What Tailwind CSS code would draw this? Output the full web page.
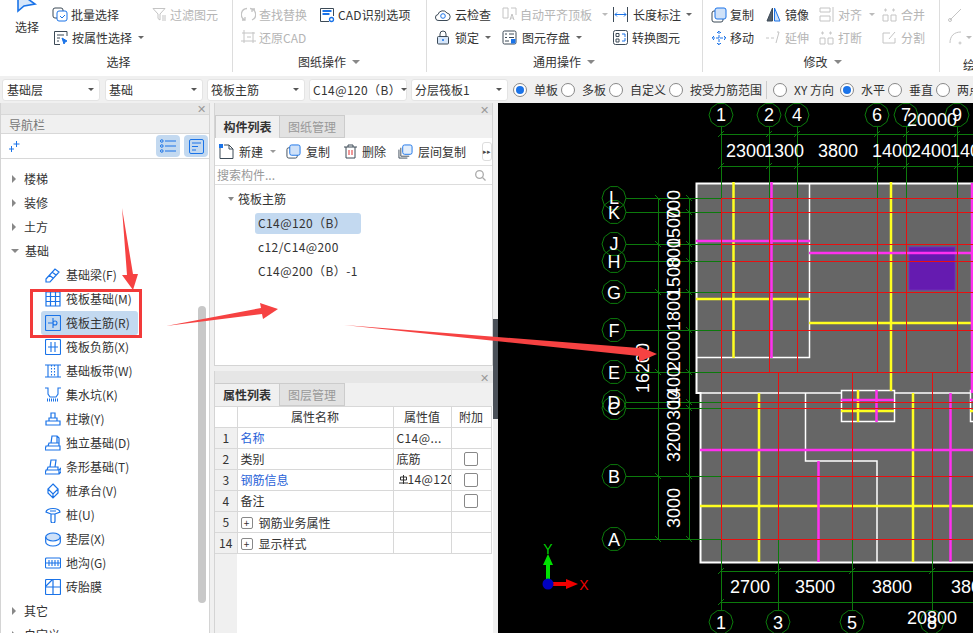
<!DOCTYPE html>
<html lang="zh-CN">
<head>
  <meta charset="UTF-8" />
  <title>筏板主筋</title>
  <script src="https://cdn.jsdelivr.net/npm/@tailwindcss/browser@4"></script>
</head>
<body class="relative w-[973px] h-[633px] overflow-hidden bg-[#f0f0f0] text-[12px] leading-none text-[#333] font-['Noto_Sans_CJK_SC',sans-serif]">
  <!-- Ribbon -->
  <header class="flex h-[76px] bg-white">
    <!-- 选择 -->
    <section class="w-[233px] shrink-0 h-[72px] border-r border-[#ddd] flex flex-col">
      <div class="flex h-[53px]">
        <div class="w-[52px] flex flex-col items-center">
          <svg class="ml-[2px] h-[13px] w-[24px]" viewBox="0 0 24 13"><path d="M3 -8 L3 11 L9 6 L20 4 Z" fill="#d6e6fa" stroke="#1a73e8" stroke-width="1.6"/></svg>
          <span class="mt-[8px] ml-[2px]">选择</span>
        </div>
        <div class="w-[100px] pt-[3px]">
          <div class="flex items-center h-[23px]"><svg class="w-[17px] h-[17px]" viewBox="0 0 17 17" fill="none" stroke="#3c4a57"><rect x="1" y="2" width="10" height="10" rx="2"/><rect x="5" y="5" width="10" height="10" rx="2" fill="#fff" stroke="#1a73e8"/><path d="M8 10l2 2 3-3" stroke="#1a73e8"/></svg><span class="ml-[2px]">批量选择</span></div>
          <div class="flex items-center h-[23px]"><svg class="ml-[1px] w-[16px] h-[16px]" viewBox="0 0 16 16" fill="none" stroke="#3c4a57"><path d="M14 6V1.500H1.500v13H7M4 5h7M4 8h3M4 11h2"/><path d="M9 8l5 3-2 1-1 2z" fill="#1a73e8" stroke="#1a73e8"/></svg><span class="ml-[3px]">按属性选择</span><i class="ml-[6px] border-x-[3px] border-t-[3px] border-x-transparent border-t-[#666]"></i></div>
        </div>
        <div class="pt-[3px] flex items-start">
          <div class="flex items-center h-[23px] text-[#b5b5b5]"><svg class="w-[15px] h-[15px]" viewBox="0 0 15 15" fill="none" stroke="#c4c4c4"><path d="M1 1.500h12L8 7v6L6 11.500V7zM10 9h4M10 11h4M10 13h4"/></svg><span class="ml-[3px]">过滤图元</span></div>
        </div>
      </div>
      <div class="h-[20px] flex items-center justify-center pl-[5px]">选择</div>
    </section>
    <!-- 图纸操作 -->
    <section class="w-[194px] shrink-0 h-[72px] border-r border-[#ddd] flex flex-col pl-[8px]">
      <div class="h-[53px] pt-[3px] flex">
        <div class="w-[78px] text-[#b5b5b5]">
          <div class="flex items-center h-[23px]"><svg class="w-[15px] h-[15px]" viewBox="0 0 15 15" fill="none" stroke="#c4c4c4" stroke-width="1.300"><path d="M6 1.500A6 6 0 0 0 4 13M9 1.500A6 6 0 0 1 11 13M4 10v3H1M11 5V2h3"/></svg><span class="ml-[3px]">查找替换</span></div>
          <div class="flex items-center h-[23px]"><svg class="w-[15px] h-[15px]" viewBox="0 0 15 15" fill="none" stroke="#c4c4c4"><path d="M3 0v13M0 11h15M12 2v11M1 3h13M6 7h4"/></svg><span class="ml-[3px]">还原CAD</span></div>
        </div>
        <div class="flex items-center h-[23px]"><svg class="w-[16px] h-[16px]" viewBox="0 0 16 16" fill="none"><path d="M10 14.500H1.500v-13h13V9" stroke="#3c4a57"/><circle cx="12.500" cy="12.500" r="2" stroke="#1a73e8" stroke-width="1.300"/><path d="M3.500 4h9M3.500 7h7" stroke="#1a73e8" stroke-width="2"/></svg><span class="ml-[3px] tracking-[0.2px]">CAD识别选项</span></div>
      </div>
      <div class="h-[18px] flex items-center justify-center pr-[9px]">图纸操作<i class="ml-[6px] border-x-[4px] border-t-[4px] border-x-transparent border-t-[#888]"></i></div>
    </section>
    <!-- 通用操作 -->
    <section class="w-[276px] shrink-0 h-[72px] border-r border-[#ddd] flex flex-col pl-[8px]">
      <div class="h-[53px] pt-[3px] flex">
        <div class="w-[67px]">
          <div class="flex items-center h-[23px]"><svg class="w-[16px] h-[14px]" viewBox="0 0 16 14" fill="none"><path d="M4 12.500a3 3 0 0 1-1-6A5 5 0 0 1 12 5a3.800 3.800 0 0 1 0 7.500z" stroke="#3c4a57"/><circle cx="8" cy="8" r="2.300" stroke="#1a73e8"/></svg><span class="ml-[4px]">云检查</span></div>
          <div class="flex items-center h-[23px]"><svg class="ml-[1px] w-[14px] h-[15px]" viewBox="0 0 14 15" fill="none"><path d="M4 6V4a3 3 0 0 1 6 0v2" stroke="#3c4a57"/><rect x="1.500" y="6.500" width="11" height="7.500" rx="1" fill="#d6e6fa" stroke="#3c4a57"/><path d="M7 9v2" stroke="#1a73e8" stroke-width="1.500"/></svg><span class="ml-[5px]">锁定</span><i class="ml-[6px] border-x-[3px] border-t-[3px] border-x-transparent border-t-[#666]"></i></div>
        </div>
        <div class="w-[111px]">
          <div class="flex items-center h-[23px] text-[#b5b5b5]"><svg class="w-[15px] h-[15px]" viewBox="0 0 15 15" fill="none" stroke="#c4c4c4"><path d="M1 1h5v10H1zM9 1h5v7M8 13l2-6 2 6M9 11h2"/></svg><span class="ml-[3px]">自动平齐顶板</span><i class="ml-[10px] border-x-[3px] border-t-[3px] border-x-transparent border-t-[#bbb]"></i></div>
          <div class="flex items-center h-[23px]"><svg class="w-[15px] h-[15px]" viewBox="0 0 15 15" fill="none" stroke="#3c4a57"><rect x="1" y="1" width="13" height="13" rx="1.500"/><path d="M3 4h2M7 4h5M3 7.500h2M7 7.500h5M3 11h4"/><rect x="9" y="9" width="4.500" height="4.500" fill="#1a73e8" stroke="none"/></svg><span class="ml-[5px]">图元存盘</span><i class="ml-[6px] border-x-[3px] border-t-[3px] border-x-transparent border-t-[#666]"></i></div>
        </div>
        <div>
          <div class="flex items-center h-[23px]"><svg class="w-[15px] h-[15px]" viewBox="0 0 15 15" fill="none"><path d="M.500 0v15M14.500 0v15" stroke="#3c4a57"/><path d="M2 7.500h11M4 5.500l-2 2 2 2M11 5.500l2 2-2 2" stroke="#1a73e8"/></svg><span class="ml-[5px]">长度标注</span><i class="ml-[5px] border-x-[3px] border-t-[3px] border-x-transparent border-t-[#666]"></i></div>
          <div class="flex items-center h-[23px]"><svg class="w-[15px] h-[15px]" viewBox="0 0 15 15" fill="none"><rect x=".500" y=".500" width="14" height="14" rx="2" stroke="#3c4a57"/><path d="M3 3.500h3v3H3zM3 9h3v3H3z" stroke="#3c4a57"/><path d="M9 4h3v3M12 8v3H9" stroke="#1a73e8"/></svg><span class="ml-[4px]">转换图元</span></div>
        </div>
      </div>
      <div class="h-[18px] flex items-center justify-center pr-[9px]">通用操作<i class="ml-[6px] border-x-[4px] border-t-[4px] border-x-transparent border-t-[#888]"></i></div>
    </section>
    <!-- 修改 -->
    <section class="w-[237px] shrink-0 h-[72px] border-r border-[#ddd] flex flex-col pl-[8px]">
      <div class="h-[53px] pt-[3px] flex">
        <div class="w-[55px]">
          <div class="flex items-center h-[23px]"><svg class="w-[16px] h-[16px]" viewBox="0 0 16 16" fill="none"><rect x="1" y="4" width="11" height="11" rx="2" stroke="#3c4a57"/><rect x="4" y="1" width="11" height="11" rx="2" fill="#cfe1f8" stroke="#1a73e8"/></svg><span class="ml-[3px]">复制</span></div>
          <div class="flex items-center h-[23px]"><svg class="w-[16px] h-[16px]" viewBox="0 0 16 16" fill="none" stroke="#1a73e8"><path d="M8 1v14M1 8h14M6 3l2-2 2 2M6 13l2 2 2-2M3 6L1 8l2 2M13 6l2 2-2 2" stroke-dasharray="3 1"/></svg><span class="ml-[3px]">移动</span></div>
        </div>
        <div class="w-[53px]">
          <div class="flex items-center h-[23px]"><svg class="w-[15px] h-[15px]" viewBox="0 0 15 15"><path d="M6.500 1v13H1z" fill="#55606b" stroke="#3c4a57"/><path d="M8.500 1v13H14z" fill="#cfe1f8" stroke="#1a73e8"/></svg><span class="ml-[4px]">镜像</span></div>
          <div class="flex items-center h-[23px] text-[#b5b5b5]"><svg class="w-[15px] h-[15px]" viewBox="0 0 15 15" fill="none" stroke="#c4c4c4"><path d="M0 8h3M5 8h3M11 2l2 0-3 11"/></svg><span class="ml-[4px]">延伸</span></div>
        </div>
        <div class="w-[63px] text-[#b5b5b5]">
          <div class="flex items-center h-[23px]"><svg class="w-[15px] h-[15px]" viewBox="0 0 15 15" fill="none" stroke="#c4c4c4"><path d="M1 1h10v4H1zM1 9h10v5H1zM14 0v15"/></svg><span class="ml-[4px]">对齐</span><i class="ml-[7px] border-x-[3px] border-t-[3px] border-x-transparent border-t-[#bbb]"></i></div>
          <div class="flex items-center h-[23px]"><svg class="w-[15px] h-[15px]" viewBox="0 0 15 15" fill="none" stroke="#c4c4c4"><path d="M1 8h5v6H1zM9 8h5v6H9zM3 2h1v2H3zM11 2h1v2h-1z"/></svg><span class="ml-[4px]">打断</span></div>
        </div>
        <div class="text-[#b5b5b5]">
          <div class="flex items-center h-[23px]"><svg class="w-[15px] h-[15px]" viewBox="0 0 15 15" fill="none" stroke="#c4c4c4"><path d="M1 8h5v6H1zM9 8h5v6H9zM3 2h1v2H3zM11 2h1v2h-1z"/></svg><span class="ml-[4px]">合并</span></div>
          <div class="flex items-center h-[23px]"><svg class="w-[15px] h-[15px]" viewBox="0 0 15 15" fill="none" stroke="#c4c4c4"><path d="M8 3H1v10h12V8M7 9l6-7"/></svg><span class="ml-[4px]">分割</span></div>
        </div>
      </div>
      <div class="h-[18px] flex items-center justify-center pr-[5px]">修改<i class="ml-[6px] border-x-[4px] border-t-[4px] border-x-transparent border-t-[#888]"></i></div>
    </section>
    <!-- 绘图, cut off by the window -->
    <section class="flex-1 h-[72px] pl-[8px] pt-[3px] overflow-hidden">
      <div class="flex items-center h-[23px]"><svg class="w-[15px] h-[15px]" viewBox="0 0 15 15" fill="none" stroke="#c4c4c4"><path d="M2 13L13 2"/><circle cx="2" cy="13" r="1.500"/></svg></div>
      <div class="flex items-center h-[23px]"><svg class="w-[15px] h-[15px]" viewBox="0 0 15 15" fill="none" stroke="#c4c4c4"><path d="M2 13C2 6 6 2 13 2"/><circle cx="12" cy="13" r="1"/></svg><i class="ml-[3px] border-x-[3px] border-t-[3px] border-x-transparent border-t-[#bbb]"></i></div>
      <div class="h-[18px] mt-[7px] ml-[15px] flex items-center">绘</div>
    </section>
  </header>

  <!-- Property toolbar -->
  <div class="flex items-center h-[27px] bg-[#f0f0f0] pl-[2px] whitespace-nowrap">
    <div class="w-[98px] h-[22px] shrink-0 mr-[5px] pl-[4px] pr-[5px] bg-white rounded-[3px] border border-[#e4e4e4] flex items-center justify-between"><span>基础层</span><i class="border-x-[3px] border-t-[3px] border-x-transparent border-t-[#555]"></i></div>
    <div class="w-[98px] h-[22px] shrink-0 mr-[4px] pl-[3px] pr-[5px] bg-white rounded-[3px] border border-[#e4e4e4] flex items-center justify-between"><span>基础</span><i class="border-x-[3px] border-t-[3px] border-x-transparent border-t-[#555]"></i></div>
    <div class="w-[98px] h-[22px] shrink-0 mr-[4px] pl-[3px] pr-[5px] bg-white rounded-[3px] border border-[#e4e4e4] flex items-center justify-between"><span>筏板主筋</span><i class="border-x-[3px] border-t-[3px] border-x-transparent border-t-[#555]"></i></div>
    <div class="w-[98px] h-[22px] shrink-0 mr-[4px] pl-[3px] pr-[5px] bg-white rounded-[3px] border border-[#e4e4e4] flex items-center justify-between"><span class="tracking-[0.4px]">C14@120（B）</span><i class="border-x-[3px] border-t-[3px] border-x-transparent border-t-[#555]"></i></div>
    <div class="w-[97px] h-[22px] shrink-0 mr-[5px] pl-[3px] pr-[5px] bg-white rounded-[3px] border border-[#e4e4e4] flex items-center justify-between"><span>分层筏板1</span><i class="border-x-[3px] border-t-[3px] border-x-transparent border-t-[#555]"></i></div>
    <span class="w-[14px] h-[14px] shrink-0 rounded-full border border-[#888] bg-white flex items-center justify-center"><i class="w-[8px] h-[8px] rounded-full bg-[#1a73e8]"></i></span><span class="ml-[7px] w-[27px] shrink-0">单板</span>
    <span class="w-[14px] h-[14px] shrink-0 rounded-full border border-[#888] bg-white"></span><span class="ml-[7px] w-[27px] shrink-0">多板</span>
    <span class="w-[14px] h-[14px] shrink-0 rounded-full border border-[#888] bg-white"></span><span class="ml-[7px] w-[39px] shrink-0">自定义</span>
    <span class="w-[14px] h-[14px] shrink-0 rounded-full border border-[#888] bg-white"></span><span class="ml-[7px] w-[76px] shrink-0">按受力筋范围</span>
    <span class="w-px h-[18px] shrink-0 bg-[#ccc] mr-[6px]"></span>
    <span class="w-[14px] h-[14px] shrink-0 rounded-full border border-[#888] bg-white"></span><span class="ml-[7px] w-[46px] shrink-0">XY 方向</span>
    <span class="w-[14px] h-[14px] shrink-0 rounded-full border border-[#888] bg-white flex items-center justify-center"><i class="w-[8px] h-[8px] rounded-full bg-[#1a73e8]"></i></span><span class="ml-[7px] w-[27px] shrink-0">水平</span>
    <span class="w-[14px] h-[14px] shrink-0 rounded-full border border-[#888] bg-white"></span><span class="ml-[7px] w-[27px] shrink-0">垂直</span>
    <span class="w-[14px] h-[14px] shrink-0 rounded-full border border-[#888] bg-white"></span><span class="ml-[7px] shrink-0">两点</span>
  </div>

  <div class="flex h-[530px]">
    <!-- Navigation panel -->
    <aside class="relative w-[210px] shrink-0 flex flex-col bg-white border-x border-[#d4d4d4]">
      <div class="h-[12px] bg-[#e6e6e6] flex justify-end items-center pr-[3px] text-[#999] text-[11px]">✕</div>
      <div class="h-[22px] pt-[2px] bg-[#f0f0f0] border-y border-[#d8d8d8] flex items-center pl-[8px] text-[#777]">导航栏</div>
      <div class="h-[28px] border-b border-[#d8d8d8] flex items-center justify-between pl-[8px] pr-[1px]">
        <svg class="w-[11px] h-[11px]" viewBox="0 0 11 11" stroke="#1a73e8" fill="none"><path d="M7.500 0v6M4.500 3h6M2.500 5v6M0 8h5"/></svg>
        <div class="flex gap-[4px]">
          <span class="w-[24px] h-[22px] rounded-[4px] bg-[#c3d9f0] flex items-center justify-center"><svg class="w-[16px] h-[14px]" viewBox="0 0 16 14" fill="none" stroke="#1a73e8"><circle cx="1.800" cy="2" r="1.300"/><circle cx="1.800" cy="7" r="1.300"/><circle cx="1.800" cy="12" r="1.300"/><path d="M5 2h11M5 7h11M5 12h11"/></svg></span>
          <span class="w-[24px] h-[22px] rounded-[4px] bg-[#c3d9f0] flex items-center justify-center"><svg class="w-[15px] h-[15px]" viewBox="0 0 15 15" fill="none" stroke="#1a73e8"><rect x=".500" y=".500" width="14" height="14" rx="1.500"/><path d="M3 4h9M3 7.500h6M3 11h4"/></svg></span>
        </div>
      </div>
      <div class="pt-[8px] h-full overflow-hidden">
        <div class="h-[24px] flex items-center pl-[11px]"><i class="border-y-[4px] border-l-[4px] border-y-transparent border-l-[#888]"></i><span class="ml-[8px]">楼梯</span></div>
        <div class="h-[24px] flex items-center pl-[11px]"><i class="border-y-[4px] border-l-[4px] border-y-transparent border-l-[#888]"></i><span class="ml-[8px]">装修</span></div>
        <div class="h-[24px] flex items-center pl-[11px]"><i class="border-y-[4px] border-l-[4px] border-y-transparent border-l-[#888]"></i><span class="ml-[8px]">土方</span></div>
        <div class="h-[24px] flex items-center pl-[10px]"><i class="border-x-[4px] border-t-[4px] border-x-transparent border-t-[#888]"></i><span class="ml-[6px]">基础</span></div>
        <div class="h-[24px] ml-[40px] w-[97px] pl-[4px] rounded-[3px] flex items-center"><svg class="w-[16px] h-[16px]" viewBox="0 0 16 16" fill="none" stroke="#1a73e8" stroke-width="1.200"><path d="M1 12L10 2l4 3-9 10-4 0zM4 8l4 3M7 5l4 3"/></svg><span class="ml-[5px]">基础梁(F)</span></div>
        <div class="h-[24px] ml-[40px] w-[97px] pl-[4px] rounded-[3px] flex items-center"><svg class="w-[16px] h-[16px]" viewBox="0 0 16 16" fill="none" stroke="#1a73e8" stroke-width="1.200"><path d="M1 1h14v14H1zM5.500 1v14M10.500 1v14M1 5.500h14M1 10.500h14"/></svg><span class="ml-[5px] whitespace-nowrap">筏板基础(M)</span></div>
        <div class="h-[24px] ml-[40px] w-[97px] pl-[4px] rounded-[3px] flex items-center bg-[#c3d9f0]"><svg class="w-[16px] h-[16px]" viewBox="0 0 16 16" fill="none" stroke="#1a73e8" stroke-width="1.100"><rect x=".500" y=".500" width="15" height="15" rx="1"/><path d="M8 3v10M3 8h5a2 2 0 0 1 4 0 2 2 0 0 1-4 0"/></svg><span class="ml-[5px] whitespace-nowrap">筏板主筋(R)</span></div>
        <div class="h-[24px] ml-[40px] w-[97px] pl-[4px] rounded-[3px] flex items-center"><svg class="w-[16px] h-[16px]" viewBox="0 0 16 16" fill="none" stroke="#1a73e8" stroke-width="1.100"><rect x=".500" y=".500" width="15" height="15" rx="1"/><path d="M6 3v10M10 3v10M3 8h10"/></svg><span class="ml-[5px] whitespace-nowrap">筏板负筋(X)</span></div>
        <div class="h-[24px] ml-[40px] w-[97px] pl-[4px] rounded-[3px] flex items-center"><svg class="w-[16px] h-[16px]" viewBox="0 0 16 16" fill="none" stroke="#1a73e8" stroke-width="1.100"><path d="M0 2h16M0 14h16M3 2v12M13 2v12"/><path d="M6.500 2v12M9.500 2v12" stroke-dasharray="1.500 1.500"/></svg><span class="ml-[5px] whitespace-nowrap">基础板带(W)</span></div>
        <div class="h-[24px] ml-[40px] w-[97px] pl-[4px] rounded-[3px] flex items-center"><svg class="w-[16px] h-[16px]" viewBox="0 0 16 16" fill="none" stroke="#1a73e8" stroke-width="1.100"><path d="M0 1h3v6l2 3h6l2-3V1h3"/><path d="M2 13h12" stroke-dasharray="1 1" stroke-width="3"/></svg><span class="ml-[5px] whitespace-nowrap">集水坑(K)</span></div>
        <div class="h-[24px] ml-[40px] w-[97px] pl-[4px] rounded-[3px] flex items-center"><svg class="w-[16px] h-[16px]" viewBox="0 0 16 16" fill="none" stroke="#1a73e8" stroke-width="1.200"><path d="M6 2h4v5H6zM4 7h8v3H4zM1 10h14v4H1z"/></svg><span class="ml-[5px] whitespace-nowrap">柱墩(Y)</span></div>
        <div class="h-[24px] ml-[40px] w-[97px] pl-[4px] rounded-[3px] flex items-center"><svg class="w-[16px] h-[16px]" viewBox="0 0 16 16" fill="none" stroke="#1a73e8" stroke-width="1.200"><path d="M7 1h5v7H6zM4 8h10v3H3zM1 11h14v4H0zM12 1l2 2v5"/></svg><span class="ml-[5px] whitespace-nowrap">独立基础(D)</span></div>
        <div class="h-[24px] ml-[40px] w-[97px] pl-[4px] rounded-[3px] flex items-center"><svg class="w-[16px] h-[16px]" viewBox="0 0 16 16" fill="none" stroke="#1a73e8" stroke-width="1.200"><path d="M6 1h5l-1 7H5zM3 8h10v3H2zM1 11h13v4H0zM14 11l2-2v4l-2 2"/></svg><span class="ml-[5px] whitespace-nowrap">条形基础(T)</span></div>
        <div class="h-[24px] ml-[40px] w-[97px] pl-[4px] rounded-[3px] flex items-center"><svg class="w-[16px] h-[16px]" viewBox="0 0 16 16" fill="none" stroke="#1a73e8" stroke-width="1.200"><path d="M8 1l5 5-5 5-5-5zM3 6v4l5 5 5-5V6M8 11v4"/></svg><span class="ml-[5px] whitespace-nowrap">桩承台(V)</span></div>
        <div class="h-[24px] ml-[40px] w-[97px] pl-[4px] rounded-[3px] flex items-center"><svg class="w-[16px] h-[16px]" viewBox="0 0 16 16" fill="none" stroke="#1a73e8" stroke-width="1.200"><path d="M1 5a7 3.500 0 0 1 14 0l-5 2H6zM6 7v7a2 2 0 0 0 4 0V7M5 4h6"/></svg><span class="ml-[5px] whitespace-nowrap">桩(U)</span></div>
        <div class="h-[24px] ml-[40px] w-[97px] pl-[4px] rounded-[3px] flex items-center"><svg class="w-[16px] h-[16px]" viewBox="0 0 16 16" fill="none" stroke="#1a73e8" stroke-width="1.200"><ellipse cx="8" cy="6" rx="7.300" ry="4" fill="#cfe1f8"/><path d="M.700 6v5c0 2 3 4 7.300 4s7.300-2 7.300-4V6"/></svg><span class="ml-[5px] whitespace-nowrap">垫层(X)</span></div>
        <div class="h-[24px] ml-[40px] w-[97px] pl-[4px] rounded-[3px] flex items-center"><svg class="w-[16px] h-[16px]" viewBox="0 0 16 16" fill="none" stroke="#1a73e8" stroke-width="1.100"><rect x=".500" y="3" width="15" height="10" rx="1"/><path d="M1 8h14M4 5v6M7 5v6M10 5v6M13 5v6"/></svg><span class="ml-[5px] whitespace-nowrap">地沟(G)</span></div>
        <div class="h-[24px] ml-[40px] w-[97px] pl-[4px] rounded-[3px] flex items-center"><svg class="w-[16px] h-[16px]" viewBox="0 0 16 16" fill="none" stroke="#1a73e8" stroke-width="1.200"><rect x=".500" y=".500" width="15" height="15" rx="1"/><path d="M8 1v14M1 8h14M1 7l6-6"/></svg><span class="ml-[5px] whitespace-nowrap">砖胎膜</span></div>
        <div class="h-[24px] flex items-center pl-[11px]"><i class="border-y-[4px] border-l-[4px] border-y-transparent border-l-[#888]"></i><span class="ml-[8px]">其它</span></div>
        <div class="h-[24px] flex items-center pl-[11px]"><i class="border-y-[4px] border-l-[4px] border-y-transparent border-l-[#888]"></i><span class="ml-[8px]">自定义</span></div>
      </div>
      <div class="absolute left-[197px] top-[203px] w-[8px] h-[297px] rounded-[4px] bg-[#c8c8c8]"></div>
    </aside>

    <!-- Middle panels -->
    <div class="w-[4px] shrink-0"></div>
    <div class="w-[279px] shrink-0 flex flex-col">
      <section class="h-[263px] flex flex-col border border-[#d4d4d4] border-t-0 bg-white">
        <div class="h-[12px] bg-[#e6e6e6] flex justify-end items-center pr-[3px] text-[#999] text-[11px]">✕</div>
        <div class="h-[23px] bg-[#f0f0f0] flex">
          <span class="w-[65px] flex items-center justify-center font-bold border border-[#ccc] border-b-0">构件列表</span>
          <span class="w-[65px] flex items-center justify-center bg-[#e2e2e2] text-[#999] border border-l-0 border-[#ccc]">图纸管理</span>
        </div>
        <div class="h-[28px] flex items-center pl-[4px] border-b border-[#e0e0e0] whitespace-nowrap">
          <svg class="w-[15px] h-[16px] shrink-0" viewBox="0 0 15 16" fill="none" stroke="#3c4a57"><path d="M3 3H1v11.500h13V5l-4-4H5"/><path d="M10 1v4h4"/><rect x="0" y="0" width="4" height="4" fill="#1a73e8" stroke="none"/></svg>
          <span class="ml-[5px]">新建</span><i class="ml-[7px] border-x-[3px] border-t-[3px] border-x-transparent border-t-[#999]"></i>
          <svg class="ml-[10px] w-[15px] h-[15px] shrink-0" viewBox="0 0 16 16" fill="none"><rect x="1" y="4" width="11" height="11" rx="2" stroke="#3c4a57"/><rect x="4" y="1" width="11" height="11" rx="2" fill="#cfe1f8" stroke="#1a73e8"/></svg>
          <span class="ml-[5px]">复制</span>
          <svg class="ml-[14px] w-[13px] h-[15px] shrink-0" viewBox="0 0 13 15" fill="none" stroke="#3c4a57"><path d="M0 3h13M4 3V1h5v2M2 3v11h9V3"/><path d="M5 6v5M8 6v5" stroke="#e03030"/></svg>
          <span class="ml-[5px]">删除</span>
          <svg class="ml-[12px] w-[15px] h-[15px] shrink-0" viewBox="0 0 16 16" fill="none"><path d="M1 6v9h9" stroke="#3c4a57"/><path d="M3 4v9h9" stroke="#3c4a57"/><rect x="5" y="1" width="10" height="10" rx="2" fill="#e3eefb" stroke="#1a73e8"/></svg>
          <span class="ml-[5px]">层间复制</span>
          <span class="ml-[16px] w-[10px] h-[19px] shrink-0 rounded-[3px] border border-[#ddd] flex items-center justify-center text-[7px] text-[#444]">▸▸</span>
        </div>
        <div class="h-[19px] flex items-center justify-between pl-[2px] pr-[6px] border-b border-[#ddd] text-[#999]">搜索构件...
          <svg class="w-[11px] h-[11px]" viewBox="0 0 11 11" fill="none" stroke="#aaa" stroke-width="1.300"><circle cx="4.500" cy="4.500" r="3.800"/><path d="M7.500 7.500l3 3"/></svg>
        </div>
        <div class="flex-1 pt-[2px]">
          <div class="h-[24px] flex items-center pl-[13px]"><i class="border-x-[3px] border-t-[4px] border-x-transparent border-t-[#888]"></i><span class="ml-[4px]">筏板主筋</span></div>
          <div class="h-[24px] flex items-center ml-[40px]"><span class="w-[106px] h-[21px] flex items-center pl-[3px] rounded-[3px] bg-[#c3d9f0] tracking-[0.4px]">C14@120（B）</span></div>
          <div class="h-[24px] flex items-center ml-[43px] tracking-[0.4px]">c12/C14@200</div>
          <div class="h-[24px] flex items-center ml-[43px] tracking-[0.4px]">C14@200（B）-1</div>
        </div>
      </section>
      <div class="h-[5px]"></div>
      <section class="flex-1 flex flex-col border-l border-[#d4d4d4] bg-white">
        <div class="h-[12px] bg-[#e6e6e6] flex justify-end items-center pr-[4px] text-[#999] text-[11px]">✕</div>
        <div class="h-[23px] bg-[#f0f0f0] flex">
          <span class="w-[65px] flex items-center justify-center font-bold border border-[#ccc] border-b-0 border-l-0">属性列表</span>
          <span class="w-[65px] flex items-center justify-center bg-[#e2e2e2] text-[#999] border border-l-0 border-[#ccc]">图层管理</span>
        </div>
        <div class="flex-1 relative">
          <div class="absolute left-0 top-0 bottom-0 w-[22px] bg-[#f0f0f0]"></div>
          <table class="relative table-fixed border-collapse w-[276px]">
            <colgroup><col class="w-[22px]" /><col class="w-[156px]" /><col class="w-[58px]" /><col class="w-[40px]" /></colgroup>
            <tr class="h-[21px] bg-white text-center">
              <td class="border border-[#d8d8d8] border-l-0"></td><td class="border border-[#d8d8d8]">属性名称</td><td class="border border-[#d8d8d8]">属性值</td><td class="border border-[#d8d8d8]">附加</td>
            </tr>
            <tr class="h-[21px] bg-white">
              <td class="border border-[#d8d8d8] border-l-0 bg-[#f0f0f0] text-center">1</td><td class="border border-[#d8d8d8] pl-[3px] text-[#2a63d8]">名称</td><td class="border border-[#d8d8d8] pl-[3px] tracking-[0.4px]">C14@...</td><td class="border border-[#d8d8d8]"></td>
            </tr>
            <tr class="h-[21px] bg-white">
              <td class="border border-[#d8d8d8] border-l-0 bg-[#f0f0f0] text-center">2</td><td class="border border-[#d8d8d8] pl-[3px]">类别</td><td class="border border-[#d8d8d8] pl-[3px]">底筋</td><td class="border border-[#d8d8d8]"><span class="block mx-auto w-[14px] h-[14px] rounded-[2px] border border-[#888]"></span></td>
            </tr>
            <tr class="h-[21px] bg-white">
              <td class="border border-[#d8d8d8] border-l-0 bg-[#f0f0f0] text-center">3</td><td class="border border-[#d8d8d8] pl-[3px] text-[#2a63d8]">钢筋信息</td><td class="border border-[#d8d8d8] pl-[5px] overflow-hidden whitespace-nowrap tracking-[0.4px]"><svg class="inline-block w-[9px] h-[9px] mb-[3px]" viewBox="0 0 9 9" fill="none" stroke="#333"><path d="M4.500 0v9M0 8h9M1.500 2h6v3h-6z"/></svg>14@120</td><td class="border border-[#d8d8d8]"><span class="block mx-auto w-[14px] h-[14px] rounded-[2px] border border-[#888]"></span></td>
            </tr>
            <tr class="h-[21px] bg-white">
              <td class="border border-[#d8d8d8] border-l-0 bg-[#f0f0f0] text-center">4</td><td class="border border-[#d8d8d8] pl-[3px]">备注</td><td class="border border-[#d8d8d8]"></td><td class="border border-[#d8d8d8]"><span class="block mx-auto w-[14px] h-[14px] rounded-[2px] border border-[#888]"></span></td>
            </tr>
            <tr class="h-[21px] bg-white">
              <td class="border border-[#d8d8d8] border-l-0 bg-[#f0f0f0] text-center">5</td><td class="border border-[#d8d8d8] pl-[3px]"><span class="inline-flex items-center"><span class="w-[12px] h-[12px] rounded-[2px] border border-[#888] flex items-center justify-center text-[10px]">+</span><span class="ml-[6px]">钢筋业务属性</span></span></td><td class="border border-[#d8d8d8]"></td><td class="border border-[#d8d8d8]"></td>
            </tr>
            <tr class="h-[21px] bg-white">
              <td class="border border-[#d8d8d8] border-l-0 bg-[#f0f0f0] text-center">14</td><td class="border border-[#d8d8d8] pl-[3px]"><span class="inline-flex items-center"><span class="w-[12px] h-[12px] rounded-[2px] border border-[#888] flex items-center justify-center text-[10px]">+</span><span class="ml-[6px]">显示样式</span></span></td><td class="border border-[#d8d8d8]"></td><td class="border border-[#d8d8d8]"></td>
            </tr>
          </table>
        </div>
      </section>
    </div>

    <!-- Splitter -->
    <div class="w-[5px] shrink-0 flex flex-col">
      <div class="h-[216px]"></div>
      <div class="h-[100px] bg-[#4a5058]"></div>
    </div>

    <!-- Drawing canvas -->
    <div class="flex-1 bg-black">
      <svg class="block w-[475px] h-[530px]" viewBox="498 103 475 530" font-family="'Liberation Sans',sans-serif" font-size="18" fill="#fff">
        <defs>
          <polygon id="hex" points="12,0 9.700,7 3.700,11.400 -3.700,11.400 -9.700,7 -12,0 -9.700,-7 -3.700,-11.400 3.700,-11.400 9.700,-7" fill="none" stroke="#0c7a0c"/>
        </defs>
        <!-- slab -->
        <path d="M696.500 183.500H980V562.500H700.500V393H696.500Z" fill="#666" stroke="#fff" stroke-width="2"/>
        <path d="M696.500 393H980" fill="none" stroke="#fff" stroke-width="1.500"/>
        <path d="M809.500 183.500V357.500H696.500" fill="none" stroke="#fff" stroke-width="1.500"/>
        <path d="M805.500 393V461H877V562" fill="none" stroke="#fff" stroke-width="1.500"/>
        <rect x="909" y="247" width="46" height="43" fill="#651bb0" stroke="#7030b8"/>
        <rect x="841.500" y="390.500" width="53" height="31" fill="#666" stroke="#fff" stroke-width="1.500"/>
        <rect x="970.500" y="390.500" width="10" height="31" fill="#666" stroke="#fff" stroke-width="1.500"/>
        <!-- yellow bars -->
        <g stroke="#ffff20" stroke-width="2.500" fill="none">
          <path d="M733.500 182V358M891 182V391M696 299H810M809 323H971M759 393V562M913 393V562M700 506H973M858 390V422M841 411H894M970 411H973"/>
        </g>
        <!-- magenta bars -->
        <g stroke="#ff30f0" stroke-width="2.500" fill="none">
          <path d="M771.500 182V358M696 241H810M809 253H973M972 183V393M700 450H973M818.500 461V562M950.500 393V562M876.500 390V422M841 400H894M970 400H973"/>
        </g>
        <!-- axis lines: green outside the slab, red inside -->
        <g stroke="#0c7a0c" fill="none">
          <path d="M626 198.500H721M626 212.500H721M626 244.500H721M626 261.500H721M626 292.500H721M626 330.500H721M626 372.500H721M626 402.500H721M626 408.500H721M626 476.500H721M626 539.500H721"/>
          <path d="M721.500 127V198M769.500 127V198M797.500 127V198M877.500 127V198M906.500 127V198M957.500 127V198"/>
          <path d="M721.500 539V610M778.500 539V610M852.500 539V610M932.500 539V610"/>
          <path d="M721 134.500H973M721 166.500H973M721 571.500H973M721 602.500H973M658.500 198V539M689.500 198V539"/>
          <path d="M718 137l6-6M766 137l6-6M794 137l6-6M874 137l6-6M903 137l6-6M954 137l6-6M718 169l6-6M766 169l6-6M794 169l6-6M874 169l6-6M903 169l6-6M954 169l6-6M718 574l6-6M775 574l6-6M849 574l6-6M929 574l6-6M718 605l6-6"/>
          <path d="M655 195l6 6M655 241l6 6M655 289l6 6M655 369l6 6M655 473l6 6M655 536l6 6M686 195l6 6M686 209l6 6M686 241l6 6M686 258l6 6M686 289l6 6M686 327l6 6M686 369l6 6M686 399l6 6M686 405l6 6M686 473l6 6M686 536l6 6"/>
        </g>
        <g stroke="#e81010" fill="none">
          <path d="M721 198.500H973M721 212.500H973M721 244.500H973M721 261.500H973M721 292.500H973M721 330.500H973M721 372.500H973M721 402.500H973M721 408.500H973M721 476.500H973M721 539.500H973"/>
          <path d="M721.500 198V539M769.500 198V372M797.500 198V372M877.500 198V372M906.500 198V372M957.500 198V372M778.500 372V539M852.500 372V539M932.500 372V539"/>
        </g>
        <!-- axis bubbles -->
        <g text-anchor="middle">
          <use href="#hex" x="721" y="115"/><use href="#hex" x="769" y="115"/><use href="#hex" x="797" y="115"/><use href="#hex" x="877" y="115"/><use href="#hex" x="906" y="115"/><use href="#hex" x="957" y="115"/>
          <text x="721" y="121">1</text><text x="769" y="121">2</text><text x="797" y="121">4</text><text x="877" y="121">6</text><text x="906" y="121">7</text><text x="957" y="121">9</text>
          <use href="#hex" x="721" y="622"/><use href="#hex" x="778" y="622"/><use href="#hex" x="852" y="622"/><use href="#hex" x="932" y="622"/>
          <text x="721" y="629">1</text><text x="778" y="629">3</text><text x="852" y="629">5</text><text x="932" y="629">8</text>
          <use href="#hex" x="614" y="198"/><use href="#hex" x="614" y="212"/><use href="#hex" x="614" y="244"/><use href="#hex" x="614" y="261"/><use href="#hex" x="614" y="292"/><use href="#hex" x="614" y="330"/><use href="#hex" x="614" y="372"/><use href="#hex" x="614" y="402"/><use href="#hex" x="614" y="408"/><use href="#hex" x="614" y="476"/><use href="#hex" x="614" y="539"/>
          <text x="614" y="204">L</text><text x="614" y="219">K</text><text x="614" y="250">J</text><text x="614" y="268">H</text><text x="614" y="299">G</text><text x="614" y="337">F</text><text x="614" y="379">E</text><text x="614" y="409">D</text><text x="614" y="415">C</text><text x="614" y="483">B</text><text x="614" y="546">A</text>
        </g>
        <!-- dimensions -->
        <g text-anchor="middle">
          <text x="746" y="157">2300</text><text x="784" y="157">1300</text><text x="838" y="157">3800</text><text x="892" y="157">1400</text><text x="931" y="157">2400</text><text x="970" y="157">1400</text>
          <text x="932" y="126">20000</text>
          <text x="750" y="593">2700</text><text x="815" y="593">3500</text><text x="892" y="593">3800</text><text x="971" y="593">3800</text>
          <text x="932" y="624">20800</text>
          <text transform="translate(680 508) rotate(-90)">3000</text>
          <text transform="translate(680 442) rotate(-90)">3200</text>
          <text transform="translate(680 405) rotate(-90)">300</text>
          <text transform="translate(680 387) rotate(-90)">1400</text>
          <text transform="translate(680 351) rotate(-90)">2000</text>
          <text transform="translate(680 311) rotate(-90)">1800</text>
          <text transform="translate(680 277) rotate(-90)">1500</text>
          <text transform="translate(680 253) rotate(-90)">800</text>
          <text transform="translate(680 228) rotate(-90)">1500</text>
          <text transform="translate(680 205) rotate(-90)">700</text>
          <text transform="translate(649 368) rotate(-90)">16200</text>
        </g>
        <!-- UCS icon -->
        <path d="M548 584V562" stroke="#00e000" stroke-width="4"/>
        <path d="M548 554l-5 11h10z" fill="#00e000"/>
        <path d="M548 584h20" stroke="#f00000" stroke-width="4"/>
        <path d="M578 584l-12-5v10z" fill="#f00000"/>
        <circle cx="548" cy="584" r="5.500" fill="#0000c0"/>
        <text x="548" y="554" text-anchor="middle" fill="#00d000" font-size="14">Y</text>
        <text x="584" y="590" text-anchor="middle" fill="#f00000" font-size="14">X</text>
      </svg>
    </div>
  </div>

  <!-- Red annotation arrows -->
  <svg class="absolute inset-0 w-[973px] h-[633px] pointer-events-none" viewBox="0 0 973 633" fill="#f64242">
    <rect x="31.500" y="290.500" width="109" height="46" fill="none" stroke="#f23a3a" stroke-width="3"/>
    <path d="M122 208L127 275H122L133 290L138 274H133Z"/>
    <path d="M166 326L261 308L260 303L278 309L263 319L262 314Z"/>
    <path d="M344 325L639 348L638 346L657 354L639 362L639 356Z"/>
  </svg>
</body>
</html>
